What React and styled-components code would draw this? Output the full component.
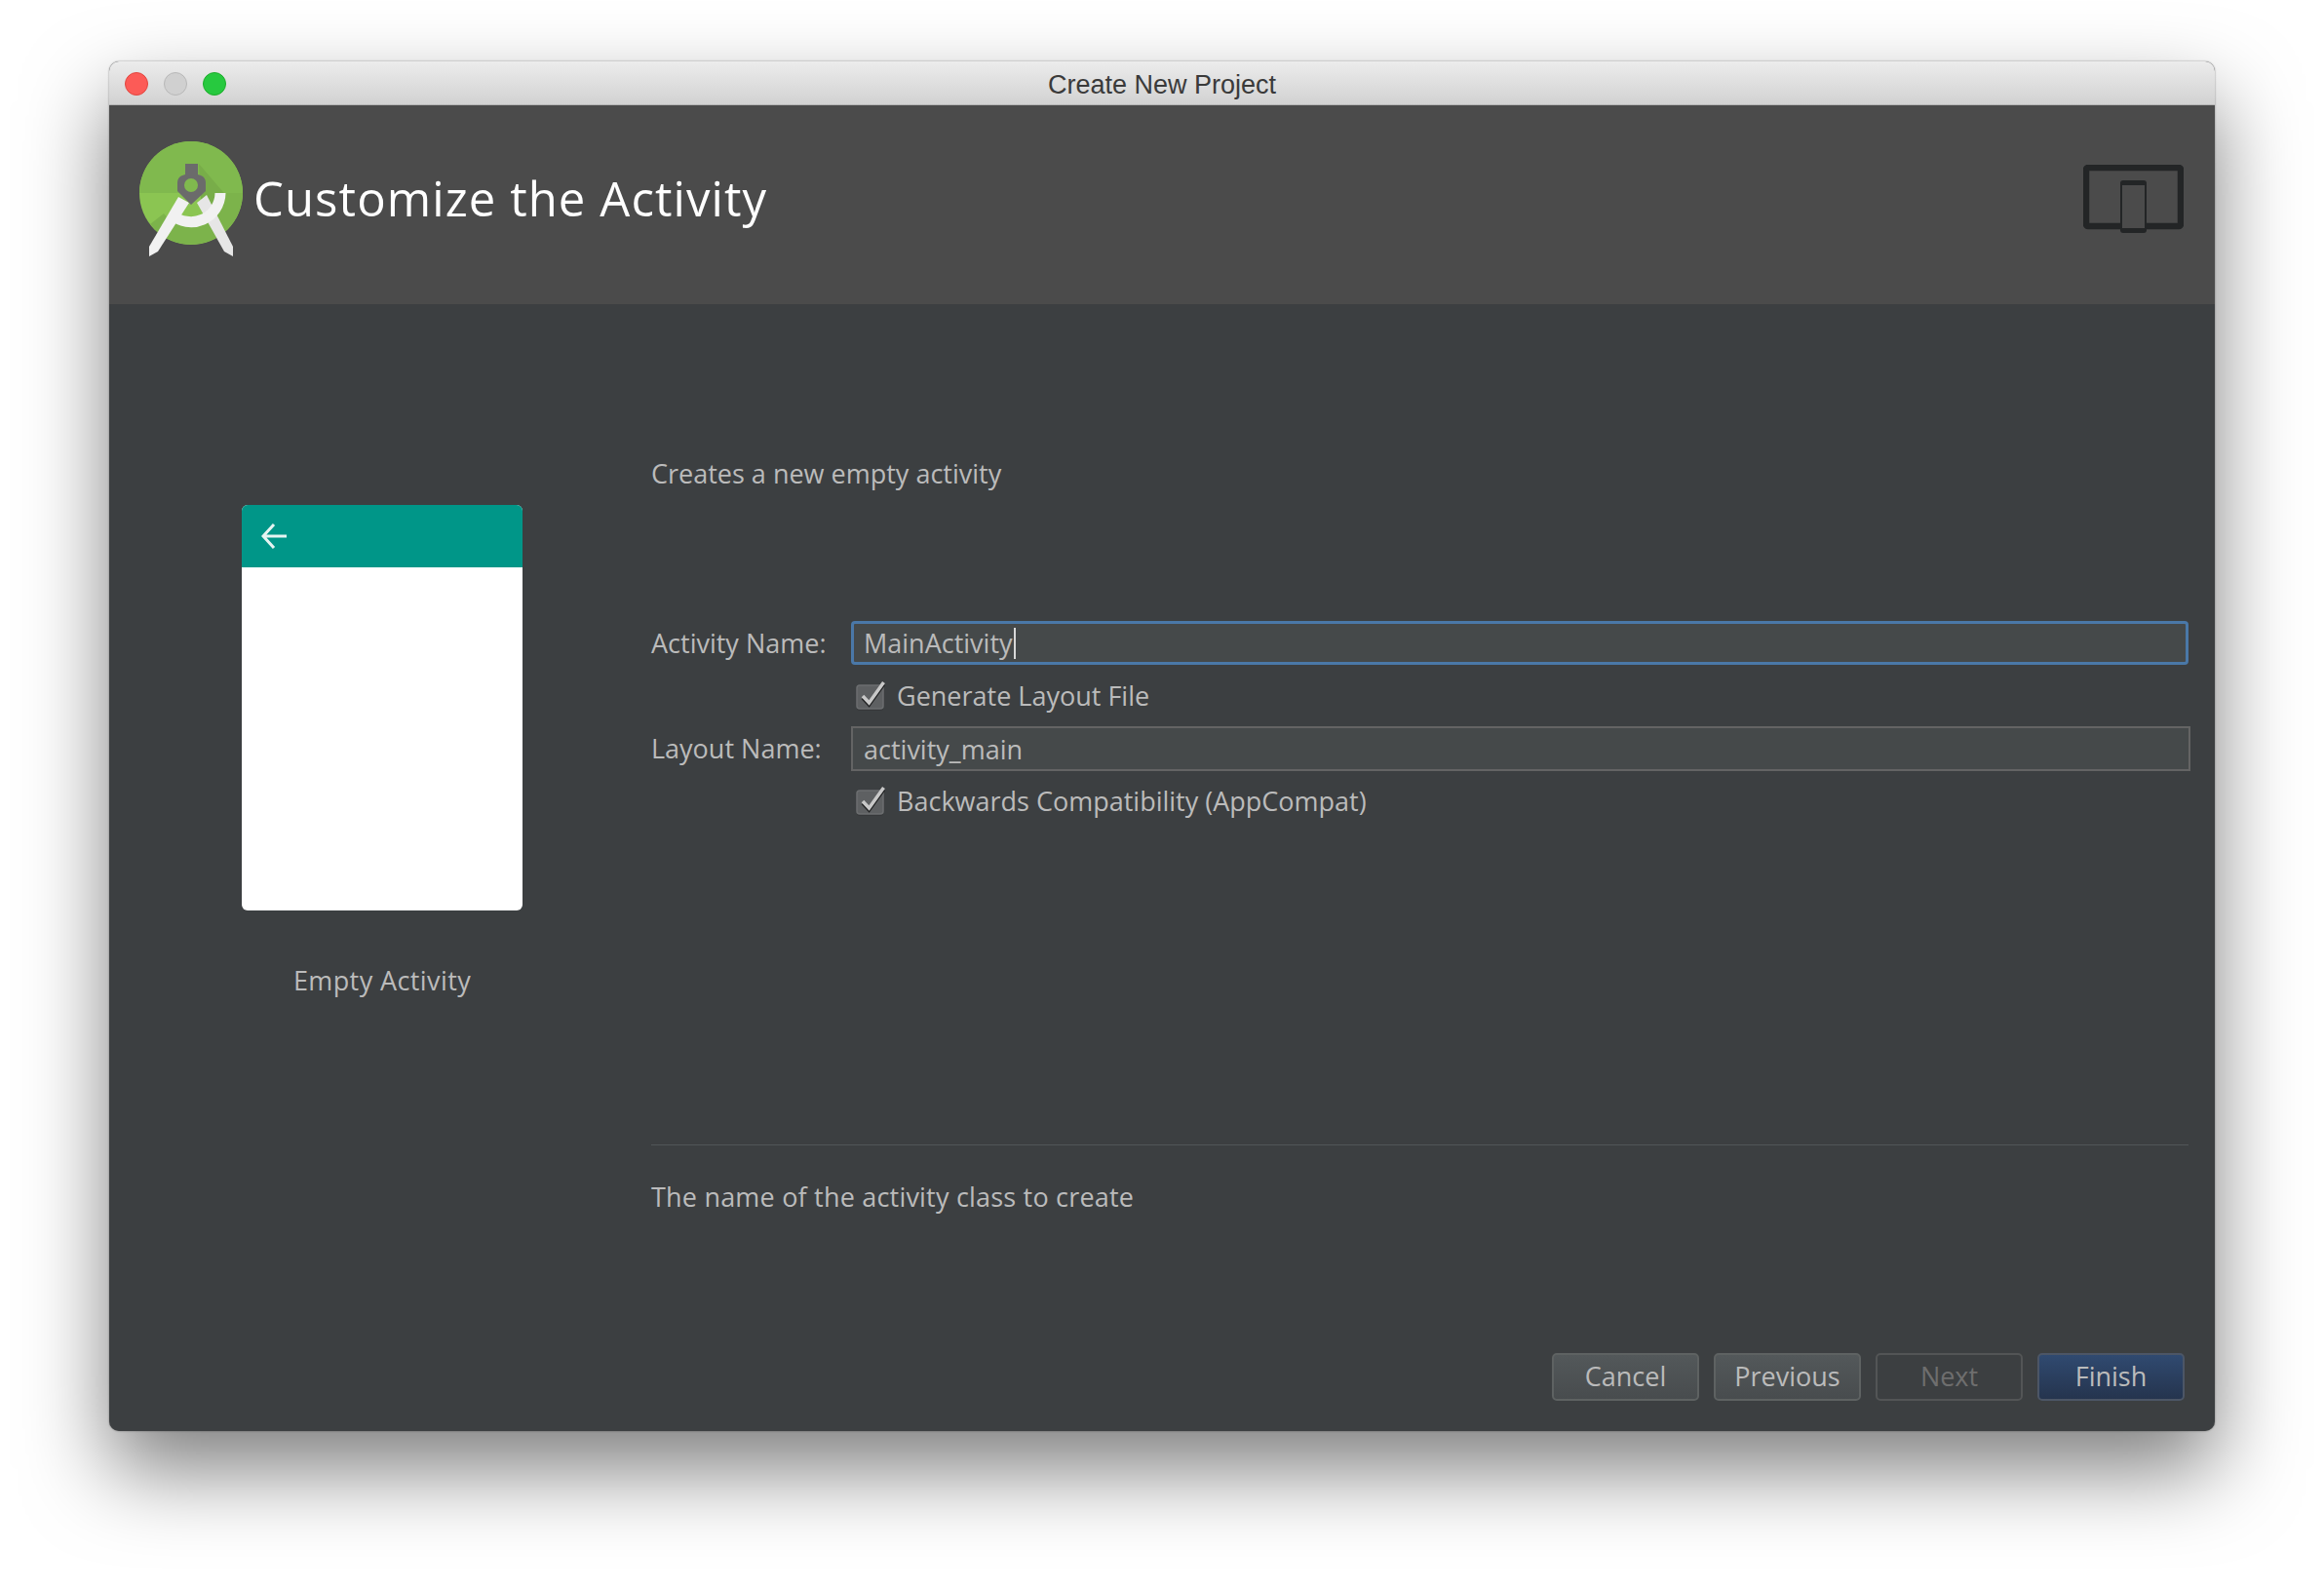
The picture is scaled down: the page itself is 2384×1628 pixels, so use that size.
import styled, { createGlobalStyle } from "styled-components"

const Global = createGlobalStyle`
    html, body {
        margin: 0;
        padding: 0;
        background: #ffffff;
    }
    body {
        width: 2384px;
        height: 1628px;
        overflow: hidden;
        font-family: "Open Sans", "DejaVu Sans", sans-serif;
    }
`

const Stage = styled.div`
    padding: 63px 0 0 112px;
`

const Window = styled.div`
    width: 2160px;
    height: 1405px;
    display: flex;
    flex-direction: column;
    border-radius: 10px;
    overflow: hidden;
    background: #3c3f41;
    box-shadow: 0 40px 85px rgba(0, 0, 0, 0.5), 0 0 2px rgba(0, 0, 0, 0.45);
`

const TitleBar = styled.div`
    height: 45px;
    flex: none;
    box-sizing: border-box;
    display: flex;
    align-items: center;
    padding: 1px 0 0 16px;
    position: relative;
    background: linear-gradient(#ececec, #d2d2d2);
    border-bottom: 1px solid #b4b4b4;
`

const Lights = styled.div`
    display: flex;
    gap: 16px;
`

const Light = styled.span`
    width: 24px;
    height: 24px;
    box-sizing: border-box;
    border-radius: 50%;
    background: ${props => props.color};
    border: 1px solid ${props => props.edge};
`

const WindowTitle = styled.div`
    position: absolute;
    left: 0;
    right: 0;
    top: 6px;
    text-align: center;
    font-family: "Liberation Sans", sans-serif;
    font-size: 27px;
    line-height: 36px;
    color: #3a3a3a;
`

const Header = styled.div`
    height: 204px;
    flex: none;
    box-sizing: border-box;
    display: flex;
    align-items: flex-start;
    padding: 22px 32px 0 18px;
    background: #4b4b4b;
`

const Heading = styled.h1`
    margin: 43px 0 0 0;
    font-family: inherit;
    font-weight: 400;
    font-size: 49px;
    line-height: 60px;
    letter-spacing: 1.1px;
    color: #ffffff;
`

const DeviceIcon = styled.svg`
    margin: 39px 0 0 auto;
`

const Body = styled.div`
    flex: 1;
    display: flex;
    min-height: 0;
`

const Preview = styled.div`
    width: 556px;
    flex: none;
    box-sizing: border-box;
    padding: 206px 0 0 136px;
`

const PhoneCard = styled.div`
    width: 288px;
    height: 416px;
    border-radius: 6px;
    overflow: hidden;
    background: #ffffff;
`

const AppBar = styled.div`
    height: 64px;
    display: flex;
    align-items: center;
    padding-left: 20px;
    background: #009688;
`

const PreviewName = styled.div`
    width: 288px;
    margin-top: 52px;
    text-align: center;
    font-size: 27px;
    line-height: 40px;
    letter-spacing: 0.4px;
    color: #bbbbbb;
`

const Content = styled.div`
    flex: 1;
    min-width: 0;
    display: flex;
    flex-direction: column;
    padding: 154px 26px 31px 0;
`

const Text = styled.p`
    margin: 0;
    font-size: 27px;
    line-height: 40px;
    color: #bbbbbb;
`

const Form = styled.div`
    margin-top: 131px;
    display: grid;
    grid-template-columns: 205px 1fr;
    grid-template-rows: 45px 63px 46px 62px;
    align-items: center;
`

const Label = styled.label`
    font-size: 27px;
    line-height: 40px;
    color: #bbbbbb;
`

const Field = styled.div`
    height: ${props => props.focused ? 45 : 46}px;
    box-sizing: border-box;
    display: flex;
    align-items: center;
    padding-left: ${props => props.focused ? 10 : 11}px;
    font-size: 27px;
    color: #bbbbbb;
    background: #45494a;
    border: ${props => props.focused ? "3px solid #4a78a8" : "2px solid #646464"};
    border-radius: ${props => props.focused ? 4 : 0}px;
    margin-right: ${props => props.focused ? 1 : -1}px;
`

const Caret = styled.span`
    width: 2px;
    height: 32px;
    margin-left: 1px;
    background: #d8d8d8;
`

const CheckRow = styled.div`
    grid-column: 2;
    display: flex;
    align-items: center;
    gap: 12px;
    padding-left: 5px;
    font-size: 27px;
    line-height: 40px;
    color: #bbbbbb;
`

const Divider = styled.div`
    margin-top: auto;
    height: 1px;
    margin-right: 1px;
    background: #515658;
`

const Hint = styled(Text)`
    margin-top: 33px;
    letter-spacing: 0.2px;
`

const Buttons = styled.div`
    margin-top: 140px;
    margin-right: 5px;
    display: flex;
    justify-content: flex-end;
    gap: 15px;
`

const Button = styled.button`
    width: 151px;
    height: 49px;
    box-sizing: border-box;
    padding: 0 0 2px 0;
    font-family: inherit;
    font-size: 27px;
    border-radius: 5px;
    color: ${props => props.variant === "disabled" ? "#6e6e6e" : "#bbbbbb"};
    border: 2px solid ${props => ({ primary: "#4c5666", disabled: "#535556" }[props.variant] || "#5e6262")};
    background: ${props => ({
        primary: "linear-gradient(#304a70, #25344e)",
        disabled: "#3c3f41",
    }[props.variant] || "linear-gradient(#53585a, #484c4e)")};
`

function Logo() {
    return (
        <svg width="130" height="140" viewBox="0 0 130 140">
            <circle cx="66" cy="68" r="53" fill="#8bc552" />
            <path d="M13 68a53 53 0 0 1 106 0z" fill="#80b94e" />
            <path d="M74 38l36 42-10 22-24-28z" fill="#78ad49" />
            <path d="M101 68a35 35 0 0 1-63 21L24 100a53 53 0 0 0 95-32z" fill="#7cb34b" />
            <path d="M53 72l11 6-32 50-9 5v-10z" fill="#f1f1f1" />
            <path d="M72 78l10-8 27 53v10l-9-5z" fill="#e6e6e6" />
            <path d="M96 68a30 30 0 0 1-50 22" fill="none" stroke="#f1f1f1" strokeWidth="11" />
            <path
                fillRule="evenodd"
                d="M60 38h13v11l3 1c3 1 5 4 5 7v9L66 80 52 66v-9c0-3 2-6 5-7l3-1zM66 53a7 7 0 1 0 0 14 7 7 0 0 0 0-14z"
                fill="#6b6b6b"
            />
        </svg>
    )
}

function Devices() {
    return (
        <DeviceIcon width="103" height="70" viewBox="0 0 103 70">
            <rect x="3" y="3" width="97" height="60" rx="2" fill="none" stroke="#232526" strokeWidth="6.5" />
            <rect x="38" y="16" width="27" height="54" rx="3" fill="#232526" />
            <rect x="40" y="21" width="23" height="44" fill="#4b4b4b" />
        </DeviceIcon>
    )
}

function Check() {
    return (
        <svg width="30" height="36" viewBox="0 0 30 36">
            <rect x="1" y="8" width="27" height="25" rx="3" fill="#36383a" />
            <rect x="1" y="7" width="27" height="24" rx="3" fill="#5e6062" stroke="#6c6e70" strokeWidth="1.5" />
            <path d="M7 20l6.5 7 15-21" fill="none" stroke="#1e1f20" strokeWidth="3.5" />
            <path d="M7 18l6.5 7 15-21" fill="none" stroke="#c8c8c8" strokeWidth="3.5" />
        </svg>
    )
}

function BackArrow() {
    return (
        <svg width="26" height="26" viewBox="0 0 26 26">
            <path d="M26 13H3M13 1L2 13l11 12" fill="none" stroke="#e6f4f2" strokeWidth="3" />
        </svg>
    )
}

export default function App() {
    return (
        <>
            <Global />
            <Stage>
                <Window>
                    <TitleBar>
                        <Lights>
                            <Light color="#fc5b57" edge="#e2463f" />
                            <Light color="#d0d0d0" edge="#b8b8b8" />
                            <Light color="#27c93f" edge="#1dad2b" />
                        </Lights>
                        <WindowTitle>Create New Project</WindowTitle>
                    </TitleBar>
                    <Header>
                        <Logo />
                        <Heading>Customize the Activity</Heading>
                        <Devices />
                    </Header>
                    <Body>
                        <Preview>
                            <PhoneCard>
                                <AppBar><BackArrow /></AppBar>
                            </PhoneCard>
                            <PreviewName>Empty Activity</PreviewName>
                        </Preview>
                        <Content>
                            <Text>Creates a new empty activity</Text>
                            <Form>
                                <Label>Activity Name:</Label>
                                <Field focused>MainActivity<Caret /></Field>
                                <CheckRow><Check />Generate Layout File</CheckRow>
                                <Label>Layout Name:</Label>
                                <Field>activity_main</Field>
                                <CheckRow><Check />Backwards Compatibility (AppCompat)</CheckRow>
                            </Form>
                            <Divider />
                            <Hint>The name of the activity class to create</Hint>
                            <Buttons>
                                <Button>Cancel</Button>
                                <Button>Previous</Button>
                                <Button variant="disabled">Next</Button>
                                <Button variant="primary">Finish</Button>
                            </Buttons>
                        </Content>
                    </Body>
                </Window>
            </Stage>
        </>
    )
}
